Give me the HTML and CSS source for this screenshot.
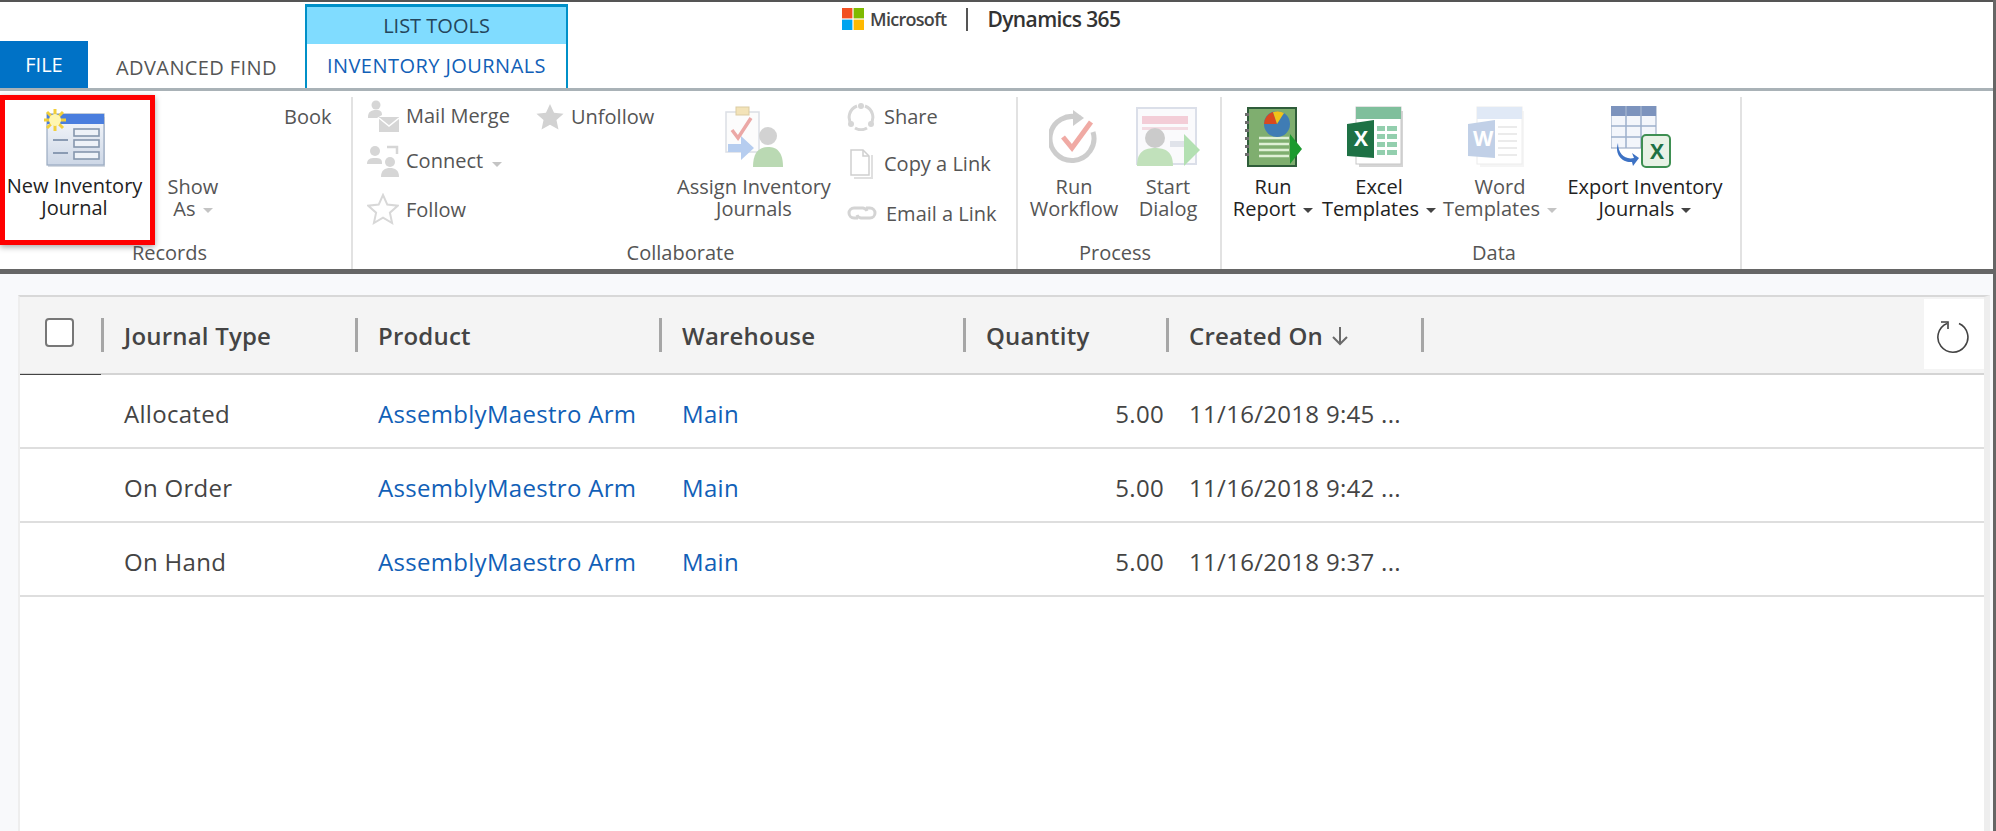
FILE: index.html
```html
<!DOCTYPE html>
<html lang="en">
<head>
    <meta charset="UTF-8">
    <meta name="viewport" content="width=device-width, initial-scale=1.0">
    <title>Inventory Journals</title>
    <link rel="stylesheet" href="styles.css">
</head>
<body>
    <!-- Tabs -->
    <header class="tabbar">
        <a href="#" class="file-tab">FILE</a>
        <a href="#" class="plain-tab">ADVANCED FIND</a>
        <div class="context-tab">
            <div class="context-title">LIST TOOLS</div>
            <a href="#" class="context-name">INVENTORY JOURNALS</a>
        </div>
        <div class="brand">
            <svg class="ms-logo" viewBox="0 0 22 22">
                <rect width="10.4" height="10.4" fill="#f25022"/>
                <rect x="11.6" width="10.4" height="10.4" fill="#7fba00"/>
                <rect y="11.6" width="10.4" height="10.4" fill="#00a4ef"/>
                <rect x="11.6" y="11.6" width="10.4" height="10.4" fill="#ffb900"/>
            </svg>
            <span class="brand-ms">Microsoft</span>
            <span class="brand-bar"></span>
            <span class="brand-name">Dynamics 365</span>
        </div>
    </header>

    <!-- Ribbon -->
    <section class="ribbon">
        <div class="group group-records">
            <div class="group-items">
                <a href="#" class="highlight-btn large-btn">
                    <svg class="large-icon" width="62" height="58" viewBox="0 0 62 58">
                        <defs>
                            <linearGradient id="formFill" x1="0" y1="0" x2="0" y2="1">
                                <stop offset="0" stop-color="#f7f9fc"/>
                                <stop offset="1" stop-color="#cdd7e6"/>
                            </linearGradient>
                        </defs>
                        <rect x="4" y="8" width="57" height="50" fill="#b8c2cf" opacity="0.6"/>
                        <rect x="3" y="5" width="57" height="51" fill="url(#formFill)" stroke="#9aabc1" stroke-width="1.2"/>
                        <rect x="3" y="5" width="57" height="10" fill="#4a7ede"/>
                        <path d="M9 31h15M9 44h15" stroke="#8a9bb3" stroke-width="2"/>
                        <rect x="30" y="20" width="25" height="7" fill="#eef2f8" stroke="#8596ad" stroke-width="1.6"/>
                        <rect x="30" y="31" width="25" height="7" fill="#eef2f8" stroke="#8596ad" stroke-width="1.6"/>
                        <rect x="30" y="43" width="25" height="7" fill="#eef2f8" stroke="#8596ad" stroke-width="1.6"/>
                        <path d="M11 0v22M0 11h22M3 3l16 16M19 3L3 19" stroke="#f2cf3a" stroke-width="3"/>
                        <circle cx="11" cy="11" r="6" fill="#fff6b0"/>
                    </svg>
                    <span class="btn-label">New Inventory<br>Journal</span>
                </a>
                <a href="#" class="show-as btn-label muted">Show<br>As <i class="caret caret-light"></i></a>
                <a href="#" class="book-btn muted">Book</a>
            </div>
            <div class="group-label">Records</div>
        </div>

        <div class="group group-collab">
            <div class="group-items">
                <div class="small-col col-mail">
                    <a href="#" class="small-btn row-1">
                        <svg class="small-icon" width="32" height="32" viewBox="0 0 32 32">
                            <circle cx="9" cy="5" r="4.5" fill="#d6d6d6"/>
                            <path d="M1 17c0-5 3-7 8-7s6 2 6 5l-5 3H1z" fill="#d6d6d6"/>
                            <rect x="12" y="17" width="20" height="15" fill="#d6d6d6"/>
                            <path d="M12 18l10 8 10-8" fill="none" stroke="#fff" stroke-width="1.5"/>
                        </svg>
                        Mail Merge
                    </a>
                    <a href="#" class="small-btn row-2">
                        <svg class="small-icon" width="32" height="32" viewBox="0 0 32 32">
                            <circle cx="8" cy="6" r="5" fill="#d6d6d6"/>
                            <path d="M0 19c0-5 3-6 8-6s7 1 7 5v1z" fill="#d6d6d6"/>
                            <circle cx="23" cy="17" r="5" fill="#d6d6d6"/>
                            <path d="M14 32c0-7 4-9 9-9s9 2 9 9z" fill="#d6d6d6"/>
                            <path d="M20 2h10v7" fill="none" stroke="#d6d6d6" stroke-width="2.5"/>
                        </svg>
                        Connect <i class="caret caret-light"></i>
                    </a>
                    <a href="#" class="small-btn row-3">
                        <svg class="small-icon" width="32" height="32" viewBox="0 0 32 32">
                            <path d="M16 2l4.300 9.600 10.400 1.100-7.800 7 2.200 10.300L16 24.700l-9.100 5.300 2.200-10.300-7.800-7 10.400-1.100z" fill="#fff" stroke="#d8d8d8" stroke-width="2"/>
                        </svg>
                        Follow
                    </a>
                </div>
                <div class="small-col col-follow">
                    <a href="#" class="small-btn row-1">
                        <svg class="small-icon" width="28" height="28" viewBox="0 0 32 32">
                            <path d="M16 1l4.600 10 10.900 1.200-8.100 7.300 2.300 10.800L16 24.800 6.300 30.300l2.300-10.800L.5 12.200 11.400 11z" fill="#d2d2d2"/>
                        </svg>
                        Unfollow
                    </a>
                </div>
                <a href="#" class="large-btn btn-assign">
                    <svg class="large-icon faded" width="58" height="62" viewBox="0 0 58 62">
                        <rect x="1" y="6" width="33" height="40" fill="#fbfbfb" stroke="#b9c0cc" stroke-width="1.500"/>
                        <rect x="11" y="1" width="13" height="8" fill="#e8c873" stroke="#b99b4a"/>
                        <path d="M7 24l6 8 13-20" fill="none" stroke="#d9534f" stroke-width="3.500"/>
                        <path d="M3 38h13v-8l13 12-13 12v-8H3z" fill="#6f9ce0"/>
                        <circle cx="43" cy="30" r="9" fill="#a6a6a6"/>
                        <path d="M28 61c0-15 6-20 15-20s15 5 15 20z" fill="#78b46a"/>
                    </svg>
                    <span class="btn-label muted">Assign Inventory<br>Journals</span>
                </a>
                <div class="small-col col-share">
                    <a href="#" class="small-btn">
                        <svg class="small-icon" width="28" height="28" viewBox="0 0 28 28">
                            <path d="M10 3a12 12 0 0 0-5 19M8 25a12 12 0 0 0 12 0M23 22a12 12 0 0 0-5-19" fill="none" stroke="#d6d6d6" stroke-width="3"/>
                            <circle cx="14" cy="3" r="3" fill="#d6d6d6"/>
                            <circle cx="4" cy="21" r="3" fill="#d6d6d6"/>
                            <circle cx="24" cy="21" r="3" fill="#d6d6d6"/>
                        </svg>
                        Share
                    </a>
                    <a href="#" class="small-btn">
                        <svg class="small-icon" width="28" height="30" viewBox="0 0 28 30">
                            <path d="M7 29h18V6" fill="none" stroke="#e0e0e0" stroke-width="2"/>
                            <path d="M4 1h12l6 6v19H4z" fill="#fff" stroke="#cfcfcf" stroke-width="1.500"/>
                            <path d="M16 1v6h6" fill="none" stroke="#cfcfcf" stroke-width="1.500"/>
                        </svg>
                        Copy a Link
                    </a>
                    <a href="#" class="small-btn row-3">
                        <svg class="small-icon" width="30" height="16" viewBox="0 0 30 16">
                            <path d="M11 13H7a5 5 0 0 1 0-10h9a5 5 0 0 1 4 3M19 3h4a5 5 0 0 1 0 10h-9a5 5 0 0 1-4-3" fill="none" stroke="#d4d4d4" stroke-width="3"/>
                        </svg>
                        Email a Link
                    </a>
                </div>
            </div>
            <div class="group-label">Collaborate</div>
        </div>

        <div class="group group-process">
            <div class="group-items">
                <a href="#" class="large-btn btn-workflow">
                    <svg class="large-icon faded" width="50" height="54" viewBox="0 0 50 54">
                        <path d="M31 8A22 22 0 1 0 44 22" fill="none" stroke="#9d9d9d" stroke-width="5"/>
                        <path d="M24 0l11 8-11 8z" fill="#9d9d9d"/>
                        <path d="M14 27l9 11L42 12" fill="none" stroke="#e2574c" stroke-width="5"/>
                    </svg>
                    <span class="btn-label muted">Run<br>Workflow</span>
                </a>
                <a href="#" class="large-btn btn-dialog">
                    <svg class="large-icon faded" width="64" height="60" viewBox="0 0 64 60">
                        <rect x="1" y="1" width="59" height="56" fill="#f7f7fb" stroke="#b9c0d4" stroke-width="2"/>
                        <rect x="6" y="9" width="46" height="8" fill="#e89db0"/>
                        <rect x="6" y="20" width="46" height="3" fill="#e8b8c6"/>
                        <rect x="34" y="34" width="18" height="6" fill="#c3c9d6"/>
                        <circle cx="19" cy="31" r="10" fill="#999"/>
                        <path d="M1 59c0-15 8-18 18-18s18 3 18 18z" fill="#85c57a"/>
                        <path d="M48 27l16 16-16 16z" fill="#69c267"/>
                    </svg>
                    <span class="btn-label muted">Start<br>Dialog</span>
                </a>
            </div>
            <div class="group-label">Process</div>
        </div>

        <div class="group group-data">
            <div class="group-items">
                <a href="#" class="large-btn btn-report">
                    <svg class="large-icon" width="58" height="60" viewBox="0 0 58 60">
                        <rect x="4" y="1" width="48" height="58" fill="#7fae6f" stroke="#2f5d3a" stroke-width="2"/>
                        <path d="M3 6v48" stroke="#6d6d6d" stroke-width="4" stroke-dasharray="3 5"/>
                        <path d="M15 31h30M15 37h30M15 43h30M15 49h30" stroke="#dff0d5" stroke-width="2.500"/>
                        <circle cx="33" cy="17" r="13" fill="#3f7cb4"/>
                        <path d="M33 17L20 17A13 13 0 0 1 29 5z" fill="#d9491f"/>
                        <path d="M33 17L29 5a13 13 0 0 1 11 1z" fill="#f0c419"/>
                        <path d="M46 27l12 15-12 15z" fill="#1c9a2f"/>
                    </svg>
                    <span class="btn-label">Run<br>Report <i class="caret"></i></span>
                </a>
                <a href="#" class="large-btn btn-excel">
                    <svg class="large-icon shift-left" width="56" height="60" viewBox="0 0 56 60">
                        <rect x="12" y="4" width="44" height="56" fill="#d5d5d5"/>
                        <rect x="9" y="0" width="45" height="57" fill="#fff" stroke="#c7c7c7"/>
                        <rect x="9" y="0" width="45" height="12" fill="#7fbf9c"/>
                        <path d="M30 19h20v5H30zM30 27h20v5H30zM30 35h20v5H30zM30 43h20v5H30z" fill="#93cfae"/>
                        <path d="M39 18v32" stroke="#fff" stroke-width="2"/>
                        <path d="M0 17l27-4v38L0 49z" fill="#1e7145"/>
                        <text x="7" y="39" class="icon-letter" fill="#fff">X</text>
                    </svg>
                    <span class="btn-label">Excel<br>Templates <i class="caret"></i></span>
                </a>
                <a href="#" class="large-btn btn-word">
                    <svg class="large-icon fainter shift-left" width="56" height="60" viewBox="0 0 56 60">
                        <rect x="12" y="4" width="44" height="56" fill="#e4e4e4"/>
                        <rect x="9" y="0" width="45" height="57" fill="#fff" stroke="#ccc"/>
                        <rect x="9" y="0" width="45" height="12" fill="#a9c1e6"/>
                        <path d="M30 20h19M30 27h19M30 34h19M30 41h19M30 48h19" stroke="#c7c7c7" stroke-width="2"/>
                        <path d="M0 17l27-4v38L0 49z" fill="#4f7cbb"/>
                        <text x="5" y="39" class="icon-letter" fill="#fff">W</text>
                    </svg>
                    <span class="btn-label muted">Word<br>Templates <i class="caret caret-light"></i></span>
                </a>
                <a href="#" class="large-btn btn-export">
                    <svg class="large-icon shift-left" width="60" height="62" viewBox="0 0 60 62">
                        <rect x="0" y="0" width="45" height="42" fill="#f3f6fb" stroke="#8ea1bd"/>
                        <rect x="0" y="0" width="45" height="10" fill="#7c93bd"/>
                        <path d="M15 0v42M30 0v42M0 20h45M0 31h45" stroke="#9db0cc" stroke-width="1.500"/>
                        <path d="M7 37c0 11 7 17 16 15l-2-5 7 5-6 8-1-4C12 57 3 49 7 37z" fill="#3d72c4"/>
                        <rect x="31" y="29" width="28" height="32" rx="4" fill="#e8f2e6" stroke="#3e8f52" stroke-width="2"/>
                        <text x="39" y="53" class="icon-letter" fill="#1e7145">X</text>
                    </svg>
                    <span class="btn-label">Export Inventory<br>Journals <i class="caret"></i></span>
                </a>
            </div>
            <div class="group-label">Data</div>
        </div>
    </section>

    <!-- Grid -->
    <main class="content">
        <div class="grid-card">
            <div class="grid-row grid-head">
                <div class="head-check"><span class="checkbox"></span></div>
                <div class="head-cell">Journal Type</div>
                <div class="head-cell">Product</div>
                <div class="head-cell">Warehouse</div>
                <div class="head-cell">Quantity</div>
                <div class="head-cell head-last">
                    Created On
                    <svg class="sort-arrow" width="18" height="20" viewBox="0 0 18 20">
                        <path d="M9 1v17M2 11l7 7 7-7" fill="none" stroke="#6a6a6a" stroke-width="2"/>
                    </svg>
                </div>
                <button class="refresh-btn">
                    <svg width="34" height="34" viewBox="0 0 34 34">
                        <path d="M22 4.500A15 15 0 1 1 10 4.400" fill="none" stroke="#444" stroke-width="1.600"/>
                        <path d="M4 3h7v7" fill="none" stroke="#444" stroke-width="1.600"/>
                    </svg>
                </button>
            </div>

            <div class="grid-row data-row">
                <div></div>
                <div class="cell">Allocated</div>
                <div class="cell"><a href="#">AssemblyMaestro Arm</a></div>
                <div class="cell"><a href="#">Main</a></div>
                <div class="cell cell-num">5.00</div>
                <div class="cell">11/16/2018 9:45 ...</div>
            </div>
            <div class="grid-row data-row">
                <div></div>
                <div class="cell">On Order</div>
                <div class="cell"><a href="#">AssemblyMaestro Arm</a></div>
                <div class="cell"><a href="#">Main</a></div>
                <div class="cell cell-num">5.00</div>
                <div class="cell">11/16/2018 9:42 ...</div>
            </div>
            <div class="grid-row data-row">
                <div></div>
                <div class="cell">On Hand</div>
                <div class="cell"><a href="#">AssemblyMaestro Arm</a></div>
                <div class="cell"><a href="#">Main</a></div>
                <div class="cell cell-num">5.00</div>
                <div class="cell">11/16/2018 9:37 ...</div>
            </div>
        </div>
    </main>
</body>
</html>
```

FILE: styles.css
```css
* {
    margin: 0;
    padding: 0;
    box-sizing: border-box;
    font-family: 'Open Sans', 'Noto Sans', sans-serif;
}

html, body {
    height: 100%;
}

body {
    background-color: #f8f9fb;
    display: flex;
    flex-direction: column;
    overflow: hidden;
    border-right: 3px solid #666;
}

a {
    color: inherit;
    text-decoration: none;
}

/* Tabs */
.tabbar {
    height: 88px;
    flex: none;
    background-color: white;
    border-top: 2px solid #555;
    display: flex;
    align-items: flex-end;
    position: relative;
}

.file-tab {
    width: 88px;
    height: 47px;
    background-color: #0072c6;
    color: white;
    font-size: 20px;
    display: flex;
    align-items: center;
    justify-content: center;
}

.plain-tab {
    width: 217px;
    height: 47px;
    padding-top: 5px;
    color: #555;
    font-size: 20px;
    letter-spacing: 0.4px;
    display: flex;
    align-items: center;
    justify-content: center;
}

.context-tab {
    width: 263px;
    height: 84px;
    border: 2px solid #0090c8;
    border-top-width: 3px;
    border-bottom: none;
    display: flex;
    flex-direction: column;
}

.context-title {
    height: 37px;
    background-color: #80dcff;
    color: #24465c;
    font-size: 20px;
    display: flex;
    align-items: center;
    justify-content: center;
}

.context-name {
    flex: 1;
    padding-bottom: 2px;
    color: #1160b7;
    font-size: 20px;
    letter-spacing: 0.45px;
    display: flex;
    align-items: center;
    justify-content: center;
}

.brand {
    margin-left: 274px;
    align-self: flex-start;
    padding-top: 3px;
    display: flex;
    align-items: center;
}

.ms-logo {
    width: 22px;
    height: 22px;
    margin-right: 6px;
}

.brand-ms {
    font-size: 18px;
    font-weight: 600;
    letter-spacing: -0.7px;
    color: #444;
}

.brand-bar {
    width: 2px;
    height: 23px;
    margin: 0 19px 0 20px;
    background-color: #555;
}

.brand-name {
    font-size: 21px;
    font-weight: 600;
    letter-spacing: -0.6px;
    color: #333;
}

/* Ribbon */
.ribbon {
    height: 186px;
    flex: none;
    background-color: white;
    border-top: 3px solid #a9b2b7;
    border-bottom: 5px solid #666;
    display: flex;
}

.group {
    display: flex;
    flex-direction: column;
    padding-top: 2px;
    position: relative;
}

/* group divider starts a little below the ribbon top */
.group::after {
    content: "";
    position: absolute;
    top: 6px;
    right: 0;
    bottom: 0;
    width: 2px;
    background-color: #e2e2e2;
}

.group-items {
    flex: 1;
    min-height: 0;
    display: flex;
}

.group-label {
    height: 30px;
    color: #555;
    font-size: 20px;
    line-height: 28px;
    text-align: center;
    flex: none;
}

.group-records {
    width: 353px;
}

.group-records .group-label {
    padding-right: 14px;
}

.group-collab {
    width: 665px;
}

.group-collab .group-label {
    padding-right: 10px;
}

.group-process {
    width: 204px;
}

.group-process .group-label {
    padding-right: 10px;
}

.group-data {
    width: 520px;
}

.group-data .group-label {
    padding-left: 24px;
}

.large-btn {
    display: flex;
    flex-direction: column;
    align-items: center;
    color: #222;
}

.large-icon {
    margin-top: 13px;
    margin-bottom: 8px;
    height: 62px;
    flex: none;
}

.shift-left {
    margin-right: 8px;
}

.faded {
    opacity: 0.5;
}

.fainter {
    opacity: 0.35;
}

.btn-label {
    font-size: 20px;
    line-height: 22px;
    text-align: center;
    white-space: nowrap;
    color: #222;
}

.btn-label.muted {
    color: #555;
}

.muted {
    color: #555;
}

.highlight-btn {
    width: 155px;
    height: 150px;
    flex: none;
    padding-right: 6px;
    border: 5px solid #f00;
    box-shadow: 0 2px 6px rgba(0, 0, 0, 0.35);
    margin-top: 2px;
}

.highlight-btn .large-icon {
    margin-top: 7px;
    margin-bottom: 6px;
}

.show-as {
    width: 70px;
    padding-top: 83px;
    margin-left: 3px;
}

.book-btn {
    margin-left: 56px;
    padding-top: 10px;
    font-size: 20px;
}

.caret {
    display: inline-block;
    width: 0;
    height: 0;
    margin-left: 2px;
    vertical-align: middle;
    border-left: 5px solid transparent;
    border-right: 5px solid transparent;
    border-top: 5px solid #444;
}

.caret-light {
    border-top-color: #c4c4c4;
}

.small-col {
    display: flex;
    flex-direction: column;
}

.small-btn {
    height: 47px;
    display: flex;
    align-items: center;
    gap: 7px;
    color: #555;
    font-size: 20px;
    white-space: nowrap;
}

.small-icon {
    flex: none;
}

.small-btn .caret {
    margin-top: 8px;
    margin-left: 2px;
}

.col-mail {
    width: 169px;
    margin-left: 14px;
}

.col-mail .row-1,
.col-mail .row-2 {
    height: 45px;
}

.col-mail .row-3,
.col-share .row-3 {
    height: 52px;
}

.col-follow {
    width: 140px;
}

.btn-assign {
    width: 180px;
    margin-left: -12px;
}

.col-share {
    margin-left: 3px;
}

.col-share .small-btn {
    gap: 9px;
}

.btn-workflow {
    width: 90px;
    margin-left: 11px;
}

.btn-dialog {
    width: 92px;
    margin-left: 3px;
}

.btn-report {
    width: 100px;
    margin-left: 1px;
}

.btn-excel {
    width: 112px;
}

.btn-word {
    width: 120px;
    margin-left: 5px;
}

.btn-export {
    width: 170px;
}

.icon-letter {
    font-size: 21px;
    font-weight: 700;
}

/* Grid */
.content {
    flex: 1;
    padding: 21px 3px 0 18px;
    min-height: 0;
}

.grid-card {
    height: 100%;
    background-color: white;
    border-top: 2px solid #d8d8d8;
    border-left: 2px solid #eee;
    border-right: 6px solid #eee;
}

.grid-row {
    display: grid;
    grid-template-columns: 81px 254px 304px 304px 203px 258px 1fr;
}

.grid-head {
    height: 78px;
    background-color: #f4f4f4;
    border-bottom: 2px solid #d4d4d4;
    align-items: center;
    position: relative;
}

.head-check {
    padding-left: 25px;
    display: flex;
    height: 100%;
    align-items: center;
    border-bottom: 1px solid #444;
    margin-bottom: -3px;
}

.checkbox {
    width: 29px;
    height: 29px;
    margin-top: -7px;
    background-color: white;
    border: 2px solid #777;
    border-radius: 4px;
}

.head-cell {
    height: 34px;
    padding-left: 20px;
    padding-top: 2px;
    border-left: 3px solid #a6a6a6;
    color: #444;
    font-size: 24px;
    font-weight: 600;
    letter-spacing: 0.2px;
    line-height: 32px;
    white-space: nowrap;
    display: flex;
    align-items: center;
    gap: 8px;
}

.head-last {
    border-right: 3px solid #a6a6a6;
}

.refresh-btn {
    position: absolute;
    right: 0;
    top: 2px;
    width: 60px;
    height: 70px;
    padding-top: 3px;
    border: none;
    background-color: white;
    display: flex;
    align-items: center;
    justify-content: center;
}

.data-row {
    height: 74px;
    border-bottom: 2px solid #dedede;
    align-items: center;
}

.cell {
    padding-left: 23px;
    padding-top: 4px;
    color: #444;
    font-size: 24px;
    letter-spacing: 0.3px;
    white-space: nowrap;
}

.cell a {
    color: #1160b7;
}

.cell-num {
    padding-right: 2px;
    text-align: right;
}
```
